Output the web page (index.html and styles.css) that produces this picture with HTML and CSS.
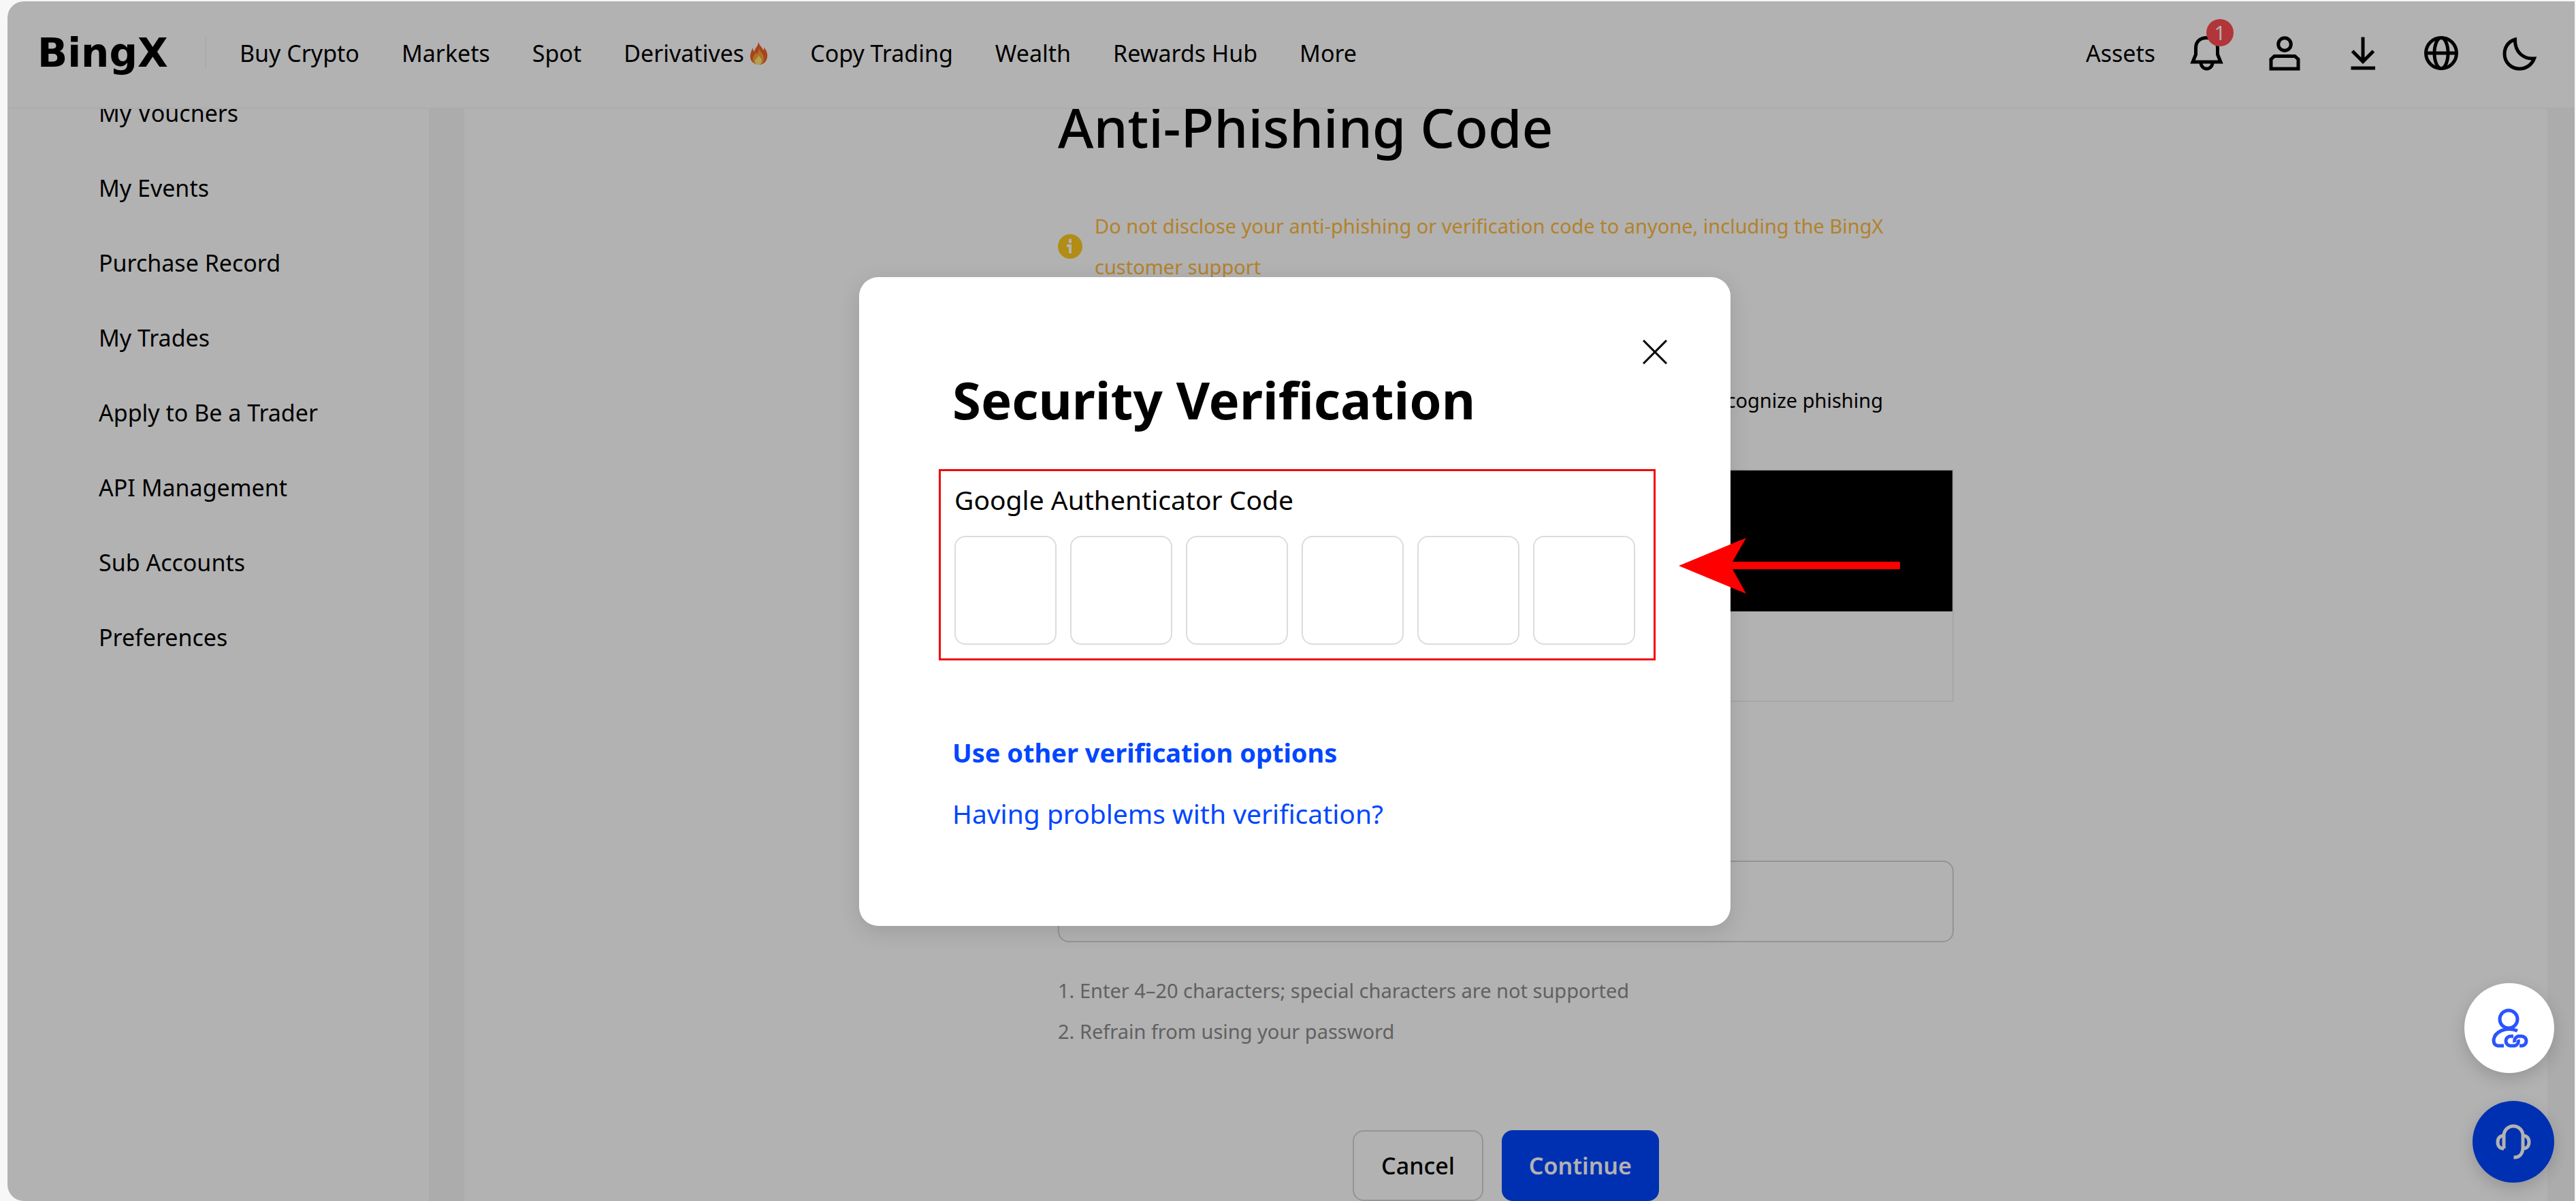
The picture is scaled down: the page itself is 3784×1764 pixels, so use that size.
FILE: index.html
```html
<!DOCTYPE html>
<html lang="en">
<head>
<meta charset="utf-8">
<meta name="viewport" content="width=device-width, initial-scale=1">
<title>Anti-Phishing Code - BingX</title>
<link rel="stylesheet" href="styles.css">
</head>
<body>
<div class="frame">
  <header class="topbar">
    <a class="logo" href="#">BingX</a>
    <span class="divider"></span>
    <nav class="menu" aria-label="Main">
      <a href="#">Buy Crypto</a>
      <a href="#">Markets</a>
      <a href="#">Spot</a>
      <a class="hot" href="#">Derivatives
        <svg class="flame" viewBox="0 0 27 34" aria-hidden="true">
          <path fill="#f0602c" d="M13 0c1 6 6 8 7 13 1-1 2-3 1-5 4 5 6 10 5 15-1 7-6 11-12 11S1 30 1 22c0-5 2-9 4-13 0 3 1 5 2 6 1-6 6-8 6-15z"/>
          <path fill="#f8a52f" d="M14 9c0 5 6 8 7 14 1 7-3 11-8 11s-9-4-8-10c1-4 3-4 4-8 1 1 2 2 2 3 2-3 3-6 3-10z"/>
          <path fill="#ffe680" d="M14 20c0 3 4 4 4 9 0 3-2 5-5 5s-5-2-5-5c0-4 5-5 6-9z"/>
        </svg>
      </a>
      <a href="#">Copy Trading</a>
      <a href="#">Wealth</a>
      <a href="#">Rewards Hub</a>
      <a href="#">More</a>
    </nav>
    <div class="account">
      <a href="#">Assets</a>
      <div class="tools">
        <button class="tool" type="button" aria-label="Notifications">
          <svg viewBox="0 0 56 56"><path d="M8 41L12.500 30V20C12.500 11 19 5.500 28.500 5.500S44.500 11 44.500 20V30L49 41Z"/><path d="M20 42A8.500 9 0 0 0 37 42"/></svg>
          <span class="badge">1</span>
        </button>
        <button class="tool" type="button" aria-label="Account">
          <svg viewBox="0 0 56 56"><circle cx="28" cy="15" r="9.300"/><path d="M8 51V37L13 32.500H43L48 37V51Z"/></svg>
        </button>
        <button class="tool" type="button" aria-label="Download">
          <svg viewBox="0 0 56 56"><path d="M28 4.500V40M12.500 25L28 40.500L43.500 25M10.500 50H46"/></svg>
        </button>
        <button class="tool" type="button" aria-label="Language">
          <svg viewBox="0 0 56 56"><circle cx="28" cy="28" r="22.500"/><ellipse cx="28" cy="28" rx="10" ry="22.500"/><path d="M5.500 28H50.500"/></svg>
        </button>
        <button class="tool" type="button" aria-label="Dark mode">
          <svg viewBox="0 0 56 56"><path d="M21.500 8C11 11 6 20 6 29C6 42 16 51 28 51C38 51 46 45 49.500 36C34 37 21 27 21.500 8Z"/></svg>
        </button>
      </div>
    </div>
  </header>

  <div class="layout">
    <aside class="sidebar">
      <nav class="side-nav" aria-label="Account">
        <a href="#">My Vouchers</a>
        <a href="#">My Events</a>
        <a href="#">Purchase Record</a>
        <a href="#">My Trades</a>
        <a href="#">Apply to Be a Trader</a>
        <a href="#">API Management</a>
        <a href="#">Sub Accounts</a>
        <a href="#">Preferences</a>
      </nav>
    </aside>
    <main class="content">
      <form class="form">
        <h1>Anti-Phishing Code</h1>
        <div class="warning">
          <svg viewBox="0 0 36 36" aria-hidden="true"><circle cx="18" cy="18" r="18" fill="#ffcb1f"/><path d="M18 7v6M13 17h5v11" fill="none" stroke="#fff" stroke-width="4"/></svg>
          <p>Do not disclose your anti-phishing or verification code to anyone, including the BingX customer support</p>
        </div>
        <p class="intro">recognize phishing</p>
        <div class="sample"><div class="sample-head"></div></div>
        <input class="code-input" type="text" aria-label="Anti-phishing code">
        <div class="hints">
          <p>1. Enter 4–20 characters; special characters are not supported</p>
          <p>2. Refrain from using your password</p>
        </div>
        <div class="actions">
          <button class="btn" type="button">Cancel</button>
          <button class="btn btn-primary" type="button">Continue</button>
        </div>
      </form>
    </main>
  </div>

  <button class="fab fab-support" type="button" aria-label="Customer support">
    <svg viewBox="0 0 56 56"><path d="M14 38V19A14 14 0 0 1 42 19V36C42 46 37 51 28.500 51"/><path d="M14 19C8 19 5 23 5 28.500S8 38 14 38M42 19C48 19 51 23 51 28.500S48 38 42 38"/></svg>
  </button>

  <div class="overlay">
    <section class="modal" role="dialog" aria-modal="true" aria-labelledby="modal-title">
      <button class="close" type="button" aria-label="Close">
        <svg viewBox="0 0 36 36"><path d="M1 1L35 35M35 1L1 35"/></svg>
      </button>
      <h2 id="modal-title">Security Verification</h2>
      <div class="code-group">
        <label for="digit-1">Google Authenticator Code</label>
        <div class="digits">
          <input id="digit-1" type="text" maxlength="1">
          <input type="text" maxlength="1" aria-label="Digit 2">
          <input type="text" maxlength="1" aria-label="Digit 3">
          <input type="text" maxlength="1" aria-label="Digit 4">
          <input type="text" maxlength="1" aria-label="Digit 5">
          <input type="text" maxlength="1" aria-label="Digit 6">
        </div>
      </div>
      <div class="links">
        <a class="strong" href="#">Use other verification options</a>
        <a href="#">Having problems with verification?</a>
      </div>
      <svg class="arrow" viewBox="0 0 325 82" aria-hidden="true"><path d="M0 41L99 0L79 35H325V46H79L99 82Z" fill="#f00"/></svg>
    </section>
  </div>

  <button class="fab fab-referral" type="button" aria-label="Referral">
    <svg viewBox="0 0 56 56"><circle cx="27" cy="15" r="13"/><path d="M40 32C22 25 6 34 5 46Q5 53 11 54H20"/><path d="M34 40H30A7 7 0 0 0 30 54H36A7 7 0 0 0 41 45"/><path d="M36 49A7 7 0 0 1 41 40H46A7 7 0 0 1 46 54H43"/></svg>
  </button>
</div>
</body>
</html>
```
FILE: styles.css
```css
* { box-sizing: border-box; }

body {
  margin: 0;
  background: #f7f7f7;
  color: #000;
  font-family: "Noto Sans", "Liberation Sans", sans-serif;
  font-size: 34px;
}

h1, h2, p { margin: 0; }
a { color: inherit; text-decoration: none; }
button { padding: 0; border: 0; background: none; color: inherit; font: inherit; }
svg { display: block; }

.frame {
  position: relative;
  display: flex;
  flex-direction: column;
  height: calc(100vh - 2px);
  margin: 2px 2px 0 11px;
  overflow: hidden;
  background: #fff;
  border-radius: 24px 0 0 24px;
}

/* Top bar */
.topbar {
  position: relative;
  z-index: 1;
  display: flex;
  flex: none;
  align-items: center;
  height: 158px;
  padding: 0 53px 4px 44px;
  background: #fff;
  border-bottom: 2px solid #f6f6f6;
}
.logo {
  min-width: 200px;
  font: bold 58px "DejaVu Sans", sans-serif;
}
.divider {
  width: 2px;
  height: 44px;
  margin: 0 49px 0 46px;
  background: #f2f2f2;
}
.menu { display: flex; gap: 62px; white-space: nowrap; }
.hot { display: flex; align-items: center; gap: 8px; }
.flame { width: 27px; height: 34px; }
.account { display: flex; align-items: center; gap: 47px; margin-left: auto; }
.tools { display: flex; gap: 59px; }
.tool { position: relative; width: 56px; height: 56px; }
.tool svg { width: 56px; height: 56px; fill: none; stroke: #000; stroke-width: 5; }
.badge {
  position: absolute;
  top: -22px;
  right: -12px;
  width: 40px;
  height: 40px;
  border-radius: 50%;
  background: #ff4d52;
  color: #fff;
  font-size: 29px;
  line-height: 40px;
}

/* Page scrolled under the top bar */
.layout {
  display: flex;
  flex: 1;
  gap: 52px;
  margin-top: -49px;
  padding-right: 40px;
  background: #f7f7f7;
}
.sidebar { flex: none; width: 619px; background: #fff; }
.side-nav {
  display: flex;
  flex-direction: column;
  padding-left: 134px;
  line-height: 110px;
}
.content {
  display: flex;
  flex: 1;
  justify-content: center;
  padding-top: 27px;
  background: #fff;
}
.form { width: 1316px; }
.form h1 { font-size: 80px; font-weight: 500; line-height: 96px; }
.warning {
  display: flex;
  align-items: center;
  gap: 18px;
  margin: 68px 0 136px;
  color: #ffba40;
  font-size: 29px;
  line-height: 60px;
}
.warning svg { flex: none; width: 36px; height: 36px; }
.warning p { max-width: 1220px; }
.intro { padding-right: 104px; font-size: 29px; line-height: 60px; text-align: right; }
.sample { height: 342px; margin: 71px 0 233px; border: 2px solid #f0f0f0; }
.sample-head { height: 207px; background: #000; }
.code-input {
  display: block;
  width: 100%;
  height: 120px;
  border: 2px solid #d4d4d4;
  border-radius: 16px;
  background: #fff;
  font: inherit;
}
.hints { margin: 41px 0 115px; color: #8c8c8c; font-size: 29px; line-height: 60px; }
.actions { display: flex; justify-content: center; gap: 27px; }
.btn {
  height: 104px;
  padding: 0 40px;
  border: 2px solid #d4d4d4;
  border-radius: 16px;
  font-weight: 500;
}
.btn-primary { padding: 0 38px; border-color: #0046ff; background: #0046ff; color: #fff; font-weight: 600; }

/* Floating buttons */
.fab {
  position: absolute;
  right: 30px;
  display: flex;
  align-items: center;
  justify-content: center;
  border-radius: 50%;
  box-shadow: 0 8px 24px rgba(0, 0, 0, 0.16);
}
.fab svg { width: 56px; height: 56px; overflow: visible; fill: none; stroke-width: 5; }
.fab-support { bottom: 27px; width: 120px; height: 120px; background: #0046ff; stroke: #fff; }
.fab-referral { bottom: 188px; width: 132px; height: 132px; background: #fff; stroke: #2a54ff; }

/* Dialog */
.overlay {
  position: absolute;
  inset: 0;
  z-index: 2;
  display: flex;
  align-items: center;
  justify-content: center;
  padding-left: 11px;
  background: rgba(0, 0, 0, 0.3);
}
.fab-referral { z-index: 3; }
.modal {
  position: relative;
  width: 1280px;
  padding: 132px 110px 135px 117px;
  border-radius: 28px;
  background: #fff;
  box-shadow: 0 8px 32px rgba(0, 0, 0, 0.12);
}
.modal h2 { padding-left: 20px; font-size: 76px; font-weight: 700; line-height: 96px; }
.close { position: absolute; top: 92px; right: 93px; width: 36px; height: 36px; }
.close svg { width: 36px; height: 36px; stroke: #000; stroke-width: 3; }
.code-group {
  margin: 54px 0 105px;
  padding: 12px 20px 20px;
  border: 3px solid #f00a0a;
  font-size: 39px;
  line-height: 60px;
}
.code-group label { display: block; }
.digits { display: grid; grid-template-columns: repeat(6, 150px); gap: 20px; margin-top: 23px; }
.digits input {
  width: 100%;
  height: 160px;
  border: 2px solid #dcdcdc;
  border-radius: 16px;
  background: #fff;
  font: inherit;
  text-align: center;
}
.links {
  display: flex;
  flex-direction: column;
  align-items: flex-start;
  gap: 30px;
  padding-left: 20px;
  color: #0046ff;
  font-size: 39px;
  line-height: 60px;
}
.links .strong { font-size: 38px; font-weight: 700; }
.arrow { position: absolute; top: 383px; left: 1204px; width: 325px; height: 82px; }
```
